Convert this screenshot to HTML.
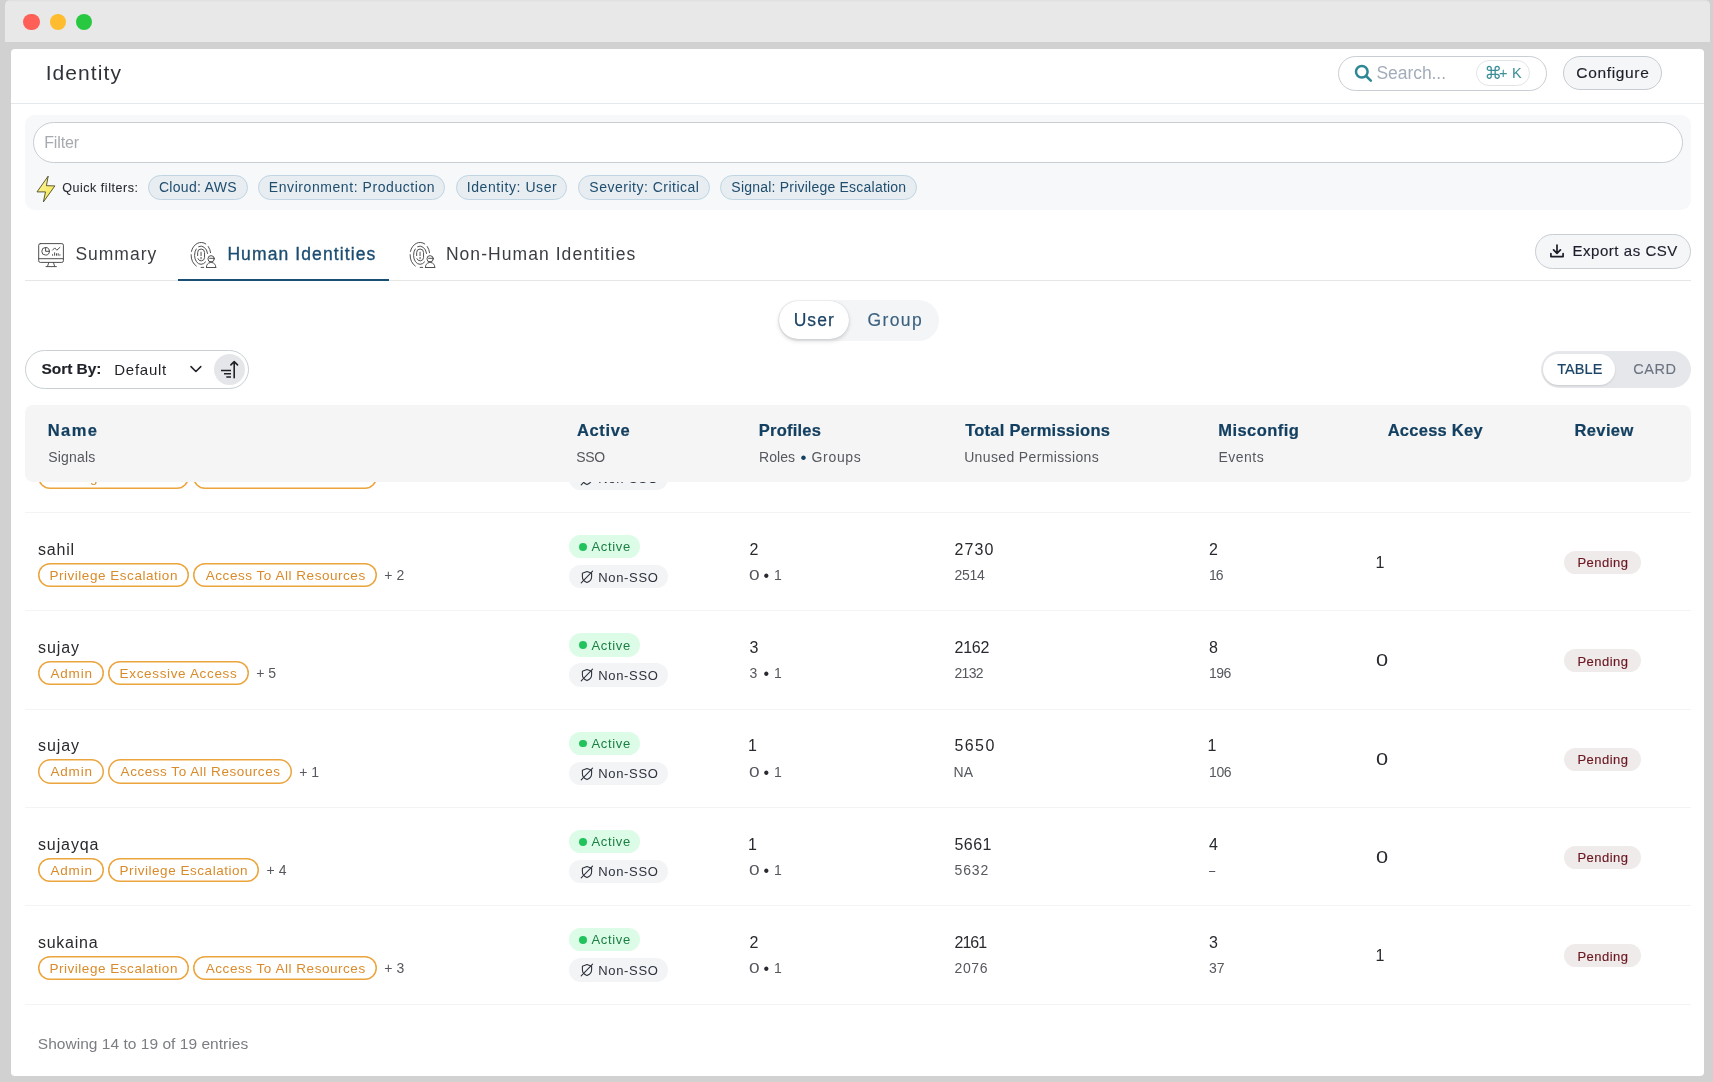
<!DOCTYPE html><html lang="en"><head><meta charset="utf-8"><title>Identity</title><style>
html,body{margin:0;padding:0}
body{width:1713px;height:1082px;background:#d1d1d1;position:relative;overflow:hidden;font-family:"Liberation Sans", "DejaVu Sans", sans-serif;}
.b{position:absolute;display:block}
.t{position:absolute;white-space:pre;line-height:1;display:block;z-index:1}
.hd{z-index:2}
.page{position:absolute;left:0;top:0;width:1713px;height:1082px;will-change:transform}

</style></head><body><div class="page">
<div class="frame">
<div class="b" style="left:5px;top:0px;width:1705px;height:42px;background:linear-gradient(#dedede,#e8e8e8 2px);border-radius:5px 5px 0 0;"></div>
<div class="b" style="left:23.3px;top:14.0px;width:16.4px;height:16.4px;background:#fe5f57;border-radius:9px;"></div>
<div class="b" style="left:49.5px;top:14.0px;width:16.4px;height:16.4px;background:#febc2e;border-radius:9px;"></div>
<div class="b" style="left:75.6px;top:14.0px;width:16.4px;height:16.4px;background:#28c840;border-radius:9px;"></div>
<div class="b" style="left:11px;top:49px;width:1693.4px;height:1026.6px;background:#ffffff;border-radius:4px;"></div>
</div>
<header class="appbar">
<span class="t" style="left:45.72px;top:62.00px;font-size:21px;color:#30343a;letter-spacing:1.065px;">Identity</span>
<div class="b" style="left:11.3px;top:102.6px;width:1693.2px;height:1.2px;background:#e4e8eb;"></div>
<div class="b" style="left:1338px;top:55.5px;width:209px;height:35px;background:#fff;border-radius:18px;border:1.2px solid #c8ced4;box-sizing:border-box;"></div>
<svg class="b" style="left:1353px;top:63px" width="20" height="20" viewBox="0 0 20 20"><circle cx="8.8" cy="8.7" r="5.8" fill="none" stroke="#2d8794" stroke-width="2.5"/><path d="M13.1 13.0 L17.8 17.6" stroke="#2d8794" stroke-width="2.6" stroke-linecap="round"/></svg>
<span class="t" style="left:1376.51px;top:65.00px;font-size:17.5px;color:#a3adba;letter-spacing:-0.063px;">Search...</span>
<div class="b" style="left:1476px;top:60.3px;width:53.7px;height:25.3px;background:#fff;border-radius:13px;border:1px solid #e1e5e8;box-sizing:border-box;"></div>
<span class="t" style="left:1484.60px;top:65.00px;font-size:17.5px;color:#3b8d98;">⌘</span>
<span class="t" style="left:1498.95px;top:66.00px;font-size:14.5px;color:#3b8d98;letter-spacing:0.307px;">+ K</span>
<div class="b" style="left:1563.2px;top:56px;width:99.3px;height:34px;background:#f5f6f7;border-radius:17px;border:1px solid #c6ccd2;box-sizing:border-box;"></div>
<span class="t" style="left:1576.30px;top:65.00px;font-size:15.5px;color:#1d1f2a;-webkit-text-stroke:0.15px #1d1f2a;letter-spacing:0.656px;">Configure</span>
</header>
<section class="filters">
<div class="b" style="left:25.2px;top:114.5px;width:1666.2px;height:95px;background:#f7f8f9;border-radius:10px;"></div>
<div class="b" style="left:33.4px;top:122.2px;width:1650px;height:41.3px;background:#fff;border-radius:21px;border:1.2px solid #c9ced3;box-sizing:border-box;"></div>
<span class="t" style="left:44.20px;top:135.00px;font-size:16px;color:#a6a9ad;letter-spacing:-0.139px;">Filter</span>
<svg class="b" style="left:34px;top:173px" width="24" height="32" viewBox="34 173 24 32"><defs><linearGradient id="lg" x1="0" y1="0" x2="1" y2="1"><stop offset="0" stop-color="#fcf6b0"/><stop offset="1" stop-color="#f6e440"/></linearGradient></defs><path d="M48.2 176.1 L37.0 191.9 L45.5 191.9 L43.4 201.9 L54.9 185.9 L46.4 185.7 Z" fill="url(#lg)" stroke="#4d4a25" stroke-width="0.9" stroke-linejoin="miter"/></svg>
<span class="t" style="left:62.24px;top:182.00px;font-size:12.5px;color:#2a2d32;-webkit-text-stroke:0.1px #2a2d32;letter-spacing:0.531px;">Quick filters:</span>
<div class="b" style="left:147.6px;top:175.2px;width:100.0px;height:24.6px;background:#e7edf1;border-radius:13px;border:1px solid #bfd5e3;box-sizing:border-box;"></div>
<span class="t" style="left:158.97px;top:180.00px;font-size:14px;color:#1f4d6e;letter-spacing:0.283px;">Cloud: AWS</span>
<div class="b" style="left:258.2px;top:175.2px;width:186.8px;height:24.6px;background:#e7edf1;border-radius:13px;border:1px solid #bfd5e3;box-sizing:border-box;"></div>
<span class="t" style="left:268.85px;top:180.00px;font-size:14px;color:#1f4d6e;letter-spacing:0.568px;">Environment: Production</span>
<div class="b" style="left:456.0px;top:175.2px;width:111.39999999999998px;height:24.6px;background:#e7edf1;border-radius:13px;border:1px solid #bfd5e3;box-sizing:border-box;"></div>
<span class="t" style="left:466.75px;top:180.00px;font-size:14px;color:#1f4d6e;letter-spacing:0.572px;">Identity: User</span>
<div class="b" style="left:578.2px;top:175.2px;width:131.79999999999995px;height:24.6px;background:#e7edf1;border-radius:13px;border:1px solid #bfd5e3;box-sizing:border-box;"></div>
<span class="t" style="left:589.37px;top:180.00px;font-size:14px;color:#1f4d6e;letter-spacing:0.499px;">Severity: Critical</span>
<div class="b" style="left:720.2px;top:175.2px;width:196.79999999999995px;height:24.6px;background:#e7edf1;border-radius:13px;border:1px solid #bfd5e3;box-sizing:border-box;"></div>
<span class="t" style="left:731.37px;top:180.00px;font-size:14px;color:#1f4d6e;letter-spacing:0.218px;">Signal: Privilege Escalation</span>
</section>
<nav class="tabs">
<div class="b" style="left:25.2px;top:280.3px;width:1666.2px;height:1.2px;background:#e4e6e8;"></div>
<div class="b" style="left:177.6px;top:278.5px;width:211px;height:2.7px;background:#1a4f75;"></div>
<svg class="b" style="left:36px;top:240px" width="30" height="30" viewBox="36 240 30 30"><g fill="none" stroke="#505050" stroke-width="1" stroke-linecap="round" stroke-linejoin="round"><rect x="38.7" y="243.6" width="24.7" height="18.8" rx="1.6"/><path d="M38.7 258.7 H63.4"/><path d="M48.8 262.4 L47.5 266.5 M53.4 262.4 L54.7 266.5 M46 266.6 H56.4"/><circle cx="45.6" cy="251.3" r="3.8"/><path d="M45.6 247.5 V251.3 H49.4"/><path d="M52.6 250.1 L54.7 247.9 L56.8 250.2 L59.9 247.4"/><path d="M52.6 254.2 V255.7 M54.6 252.4 V255.7 M56.5 253.3 V255.7 M58.2 253.3 V255.7 M59.9 254.4 V255.7" stroke-linecap="butt"/></g></svg>
<svg class="b" style="left:186px;top:238px" width="36" height="34" viewBox="186 238 36 34"><g fill="none" stroke="#505050" stroke-width="1" stroke-linecap="round" stroke-linejoin="round"><path d="M191.43 251.42 A9.8 12.3 0 0 1 205.80 243.95 M208.30 246.53 A9.8 12.3 0 0 1 210.58 252.68 M196.30 266.03 A9.8 12.6 0 0 1 191.10 254.68 M201.1 267.4 H203.7 M205.60 261.93 A6.6 9.2 0 0 1 196.20 249.04 M198.63 246.67 A6.6 9.2 0 0 1 207.58 253.44 M197.65 255.6 V252.5 A3.45 3.45 0 0 1 204.55 252.5 V257.6 A3.45 3.45 0 0 1 197.9 258.7 M201.05 252.2 V255.7 M201.05 257.4 V258.8"/><circle cx="211.1" cy="258.8" r="3.15"/><path d="M209.6 258.3 H214.5"/><path d="M209.9 262.0 Q211.1 262.5 212.3 262.0" stroke-width="1.3"/><path d="M206.4 267.4 C206.4 264.6 207.8 263.2 209.7 262.7 M212.5 262.7 C214.4 263.2 215.8 264.6 215.8 267.4 M206.4 267.5 H215.8"/></g></svg>
<svg class="b" style="left:405px;top:238px" width="36" height="34" viewBox="186 238 36 34"><g fill="none" stroke="#505050" stroke-width="1" stroke-linecap="round" stroke-linejoin="round"><path d="M191.43 251.42 A9.8 12.3 0 0 1 205.80 243.95 M208.30 246.53 A9.8 12.3 0 0 1 210.58 252.68 M196.30 266.03 A9.8 12.6 0 0 1 191.10 254.68 M201.1 267.4 H203.7 M205.60 261.93 A6.6 9.2 0 0 1 196.20 249.04 M198.63 246.67 A6.6 9.2 0 0 1 207.58 253.44 M197.65 255.6 V252.5 A3.45 3.45 0 0 1 204.55 252.5 V257.6 A3.45 3.45 0 0 1 197.9 258.7 M201.05 252.2 V255.7 M201.05 257.4 V258.8"/><circle cx="211.1" cy="258.8" r="3.15"/><path d="M209.6 258.3 H214.5"/><path d="M209.9 262.0 Q211.1 262.5 212.3 262.0" stroke-width="1.3"/><path d="M206.4 267.4 C206.4 264.6 207.8 263.2 209.7 262.7 M212.5 262.7 C214.4 263.2 215.8 264.6 215.8 267.4 M206.4 267.5 H215.8"/></g></svg>
<span class="t" style="left:75.41px;top:246.00px;font-size:17.5px;color:#3a3d42;letter-spacing:0.990px;">Summary</span>
<span class="t" style="left:227.39px;top:246.00px;font-size:17.5px;color:#1b4d72;-webkit-text-stroke:0.35px #1b4d72;letter-spacing:1.108px;">Human Identities</span>
<span class="t" style="left:445.89px;top:246.00px;font-size:17.5px;color:#3a3d42;letter-spacing:1.059px;">Non-Human Identities</span>
<div class="b" style="left:1535.2px;top:234px;width:156px;height:35px;background:#f4f6f8;border-radius:18px;border:1px solid #c9ced3;box-sizing:border-box;"></div>
<svg class="b" style="left:1549px;top:244px" width="16" height="15" viewBox="0 0 16 15"><path d="M8 1 V9 M4.6 5.9 L8 9.3 L11.4 5.9 M1.9 9.6 V12.6 H14.1 V9.6" fill="none" stroke="#1c1d29" stroke-width="1.7" stroke-linecap="round" stroke-linejoin="round"/></svg>
<span class="t" style="left:1572.38px;top:243.00px;font-size:15px;color:#1d1e2b;-webkit-text-stroke:0.15px #1d1e2b;letter-spacing:0.552px;">Export as CSV</span>
</nav>
<div class="toolbar">
<div class="b" style="left:778.3px;top:300px;width:161.2px;height:41.2px;background:#f3f5f7;border-radius:21px;"></div>
<div class="b" style="left:778.6px;top:300.6px;width:70.8px;height:38.6px;background:#fff;border-radius:20px;box-shadow:0 2px 4px rgba(0,0,0,.16),0 0 1px rgba(0,0,0,.18);"></div>
<span class="t" style="left:793.69px;top:312.00px;font-size:17.5px;color:#1c4466;-webkit-text-stroke:0.25px #1c4466;letter-spacing:1.049px;">User</span>
<span class="t" style="left:867.41px;top:312.00px;font-size:17.5px;color:#3c6280;-webkit-text-stroke:0.15px #3c6280;letter-spacing:1.400px;">Group</span>
<div class="b" style="left:25.2px;top:350px;width:223.5px;height:38.5px;background:#fff;border-radius:20px;border:1.2px solid #c8d0d4;box-sizing:border-box;"></div>
<span class="t" style="left:41.60px;top:361.00px;font-size:15.5px;color:#1f2128;font-weight:700;-webkit-text-stroke:0.15px #1f2128;letter-spacing:-0.071px;">Sort By:</span>
<span class="t" style="left:114.28px;top:362.00px;font-size:15px;color:#1f2128;letter-spacing:0.745px;">Default</span>
<svg class="b" style="left:188px;top:363px" width="16" height="12" viewBox="0 0 16 12"><path d="M3.0 3.6 L7.9 8.5 L12.8 3.6" fill="none" stroke="#1f2128" stroke-width="1.5" stroke-linecap="round" stroke-linejoin="round"/></svg>
<div class="b" style="left:214px;top:353.7px;width:31px;height:31px;background:#e5e6e9;border-radius:16px;"></div>
<svg class="b" style="left:218px;top:358px" width="24" height="24" viewBox="218 358 24 24"><path d="M221 370.6 H231 M224 373.8 H231 M226.3 377.1 H231" stroke="#1f2128" stroke-width="1.5" fill="none"/><path d="M234.2 377.8 V361.8 M230.9 364.9 L234.2 361.6 L237.5 364.9" stroke="#1f2128" stroke-width="1.6" fill="none" stroke-linecap="round" stroke-linejoin="round"/></svg>
<div class="b" style="left:1540.8px;top:351px;width:150.5px;height:37px;background:#e5e7eb;border-radius:19px;"></div>
<div class="b" style="left:1543px;top:354px;width:72px;height:31.4px;background:#fff;border-radius:16px;box-shadow:0 1px 2px rgba(0,0,0,.12);"></div>
<span class="t" style="left:1557.20px;top:362.00px;font-size:14.5px;color:#1c4466;-webkit-text-stroke:0.2px #1c4466;letter-spacing:0.073px;">TABLE</span>
<span class="t" style="left:1633.15px;top:362.00px;font-size:14.5px;color:#6b7280;-webkit-text-stroke:0.1px #6b7280;letter-spacing:0.613px;">CARD</span>
</div>
<article class="row r0">
<div class="b" style="left:25.2px;top:512.0px;width:1666.2px;height:1.2px;background:#f3f4f5;"></div>
<div class="b" style="left:37.900000000000006px;top:464.5px;width:150.9px;height:24.4px;background:#fff;border-radius:13px;box-shadow:inset 0 0 0 1.5px #eba53c;"></div>
<span class="t" style="left:49.39px;top:471.00px;font-size:13.5px;color:#d98b2b;letter-spacing:0.539px;">Privilege Escalation</span>
<div class="b" style="left:193.29999999999998px;top:464.5px;width:183.60000000000002px;height:24.4px;background:#fff;border-radius:13px;box-shadow:inset 0 0 0 1.5px #eba53c;"></div>
<span class="t" style="left:205.80px;top:471.00px;font-size:13.5px;color:#d98b2b;letter-spacing:0.535px;">Access To All Resources</span>
<div class="b" style="left:569.3px;top:436.6px;width:71.2px;height:23.4px;background:#dcfce7;border-radius:12px;"></div>
<div class="b" style="left:578.9px;top:444.6px;width:7.8px;height:7.8px;background:#22c35d;border-radius:4px;"></div>
<span class="t" style="left:591.40px;top:442.00px;font-size:13px;color:#1b7f43;letter-spacing:0.687px;">Active</span>
<div class="b" style="left:569.2px;top:466.8px;width:98.8px;height:23.4px;background:#f3f4f6;border-radius:12px;"></div>
<svg class="b" style="left:580px;top:471.70px" width="14" height="14" viewBox="0 0 14 14"><path d="M7 1.6 L11.6 3.2 V6.8 C11.6 9.6 9.6 11.6 7 12.6 C4.4 11.6 2.4 9.6 2.4 6.8 V3.2 Z" fill="none" stroke="#2c313c" stroke-width="1.1" stroke-linejoin="round"/><path d="M1.2 12.9 L12.6 1.1" stroke="#2c313c" stroke-width="1.1" stroke-linecap="round"/></svg>
<span class="t" style="left:598.23px;top:472.00px;font-size:13px;color:#2c313c;letter-spacing:0.680px;">Non-SSO</span>
</article>
<article class="row r1">
<div class="b" style="left:25.2px;top:610.3px;width:1666.2px;height:1.2px;background:#f3f4f5;"></div>
<span class="t" style="left:37.98px;top:542.00px;font-size:16px;color:#282a2f;letter-spacing:0.803px;">sahil</span>
<div class="b" style="left:37.900000000000006px;top:562.8000000000001px;width:150.9px;height:24.4px;background:#fff;border-radius:13px;box-shadow:inset 0 0 0 1.5px #eba53c;"></div>
<span class="t" style="left:49.39px;top:569.00px;font-size:13.5px;color:#d98b2b;letter-spacing:0.539px;">Privilege Escalation</span>
<div class="b" style="left:193.29999999999998px;top:562.8000000000001px;width:183.60000000000002px;height:24.4px;background:#fff;border-radius:13px;box-shadow:inset 0 0 0 1.5px #eba53c;"></div>
<span class="t" style="left:205.80px;top:569.00px;font-size:13.5px;color:#d98b2b;letter-spacing:0.535px;">Access To All Resources</span>
<span class="t" style="left:384.37px;top:568.00px;font-size:14px;color:#55585e;letter-spacing:0.076px;">+ 2</span>
<div class="b" style="left:569.3px;top:534.9px;width:71.2px;height:23.4px;background:#dcfce7;border-radius:12px;"></div>
<div class="b" style="left:578.9px;top:542.9px;width:7.8px;height:7.8px;background:#22c35d;border-radius:4px;"></div>
<span class="t" style="left:591.40px;top:540.00px;font-size:13px;color:#1b7f43;letter-spacing:0.687px;">Active</span>
<div class="b" style="left:569.2px;top:565.1px;width:98.8px;height:23.4px;background:#f3f4f6;border-radius:12px;"></div>
<svg class="b" style="left:580px;top:570.00px" width="14" height="14" viewBox="0 0 14 14"><path d="M7 1.6 L11.6 3.2 V6.8 C11.6 9.6 9.6 11.6 7 12.6 C4.4 11.6 2.4 9.6 2.4 6.8 V3.2 Z" fill="none" stroke="#2c313c" stroke-width="1.1" stroke-linejoin="round"/><path d="M1.2 12.9 L12.6 1.1" stroke="#2c313c" stroke-width="1.1" stroke-linecap="round"/></svg>
<span class="t" style="left:598.23px;top:571.00px;font-size:13px;color:#2c313c;letter-spacing:0.680px;">Non-SSO</span>
<span class="t" style="left:749.60px;top:542.00px;font-size:16px;color:#282a2f;">2</span>
<span class="t" style="left:749.11px;top:568.00px;font-size:14px;color:#55585e;transform:scaleX(1.36);transform-origin:0 0;">0</span>
<span class="t" style="left:763.60px;top:568.00px;font-size:16px;color:#282a2f;">•</span>
<span class="t" style="left:773.88px;top:568.00px;font-size:14px;color:#55585e;">1</span>
<span class="t" style="left:954.50px;top:542.00px;font-size:16px;color:#282a2f;letter-spacing:1.110px;">2730</span>
<span class="t" style="left:954.50px;top:568.00px;font-size:14px;color:#55585e;letter-spacing:-0.296px;">2514</span>
<span class="t" style="left:1209.00px;top:542.00px;font-size:16px;color:#282a2f;">2</span>
<span class="t" style="left:1209.00px;top:568.00px;font-size:14px;color:#55585e;letter-spacing:-1.000px;">16</span>
<span class="t" style="left:1375.49px;top:555.00px;font-size:16px;color:#282a2f;">1</span>
<div class="b" style="left:1564.0px;top:551.1px;width:77.1px;height:22.9px;background:#f0ebeb;border-radius:12px;"></div>
<span class="t" style="left:1577.43px;top:556.00px;font-size:13px;color:#6a1720;-webkit-text-stroke:0.15px #6a1720;letter-spacing:0.483px;">Pending</span>
</article>
<article class="row r2">
<div class="b" style="left:25.2px;top:708.5999999999999px;width:1666.2px;height:1.2px;background:#f3f4f5;"></div>
<span class="t" style="left:37.98px;top:640.00px;font-size:16px;color:#282a2f;letter-spacing:0.942px;">sujay</span>
<div class="b" style="left:37.900000000000006px;top:661.1px;width:65.7px;height:24.4px;background:#fff;border-radius:13px;box-shadow:inset 0 0 0 1.5px #eba53c;"></div>
<span class="t" style="left:50.40px;top:667.00px;font-size:13.5px;color:#d98b2b;letter-spacing:0.855px;">Admin</span>
<div class="b" style="left:108.10000000000001px;top:661.1px;width:140.5px;height:24.4px;background:#fff;border-radius:13px;box-shadow:inset 0 0 0 1.5px #eba53c;"></div>
<span class="t" style="left:119.59px;top:667.00px;font-size:13.5px;color:#d98b2b;letter-spacing:0.660px;">Excessive Access</span>
<span class="t" style="left:256.17px;top:666.00px;font-size:14px;color:#55585e;letter-spacing:0.076px;">+ 5</span>
<div class="b" style="left:569.3px;top:633.1999999999999px;width:71.2px;height:23.4px;background:#dcfce7;border-radius:12px;"></div>
<div class="b" style="left:578.9px;top:641.1999999999999px;width:7.8px;height:7.8px;background:#22c35d;border-radius:4px;"></div>
<span class="t" style="left:591.40px;top:639.00px;font-size:13px;color:#1b7f43;letter-spacing:0.687px;">Active</span>
<div class="b" style="left:569.2px;top:663.4px;width:98.8px;height:23.4px;background:#f3f4f6;border-radius:12px;"></div>
<svg class="b" style="left:580px;top:668.30px" width="14" height="14" viewBox="0 0 14 14"><path d="M7 1.6 L11.6 3.2 V6.8 C11.6 9.6 9.6 11.6 7 12.6 C4.4 11.6 2.4 9.6 2.4 6.8 V3.2 Z" fill="none" stroke="#2c313c" stroke-width="1.1" stroke-linejoin="round"/><path d="M1.2 12.9 L12.6 1.1" stroke="#2c313c" stroke-width="1.1" stroke-linecap="round"/></svg>
<span class="t" style="left:598.23px;top:669.00px;font-size:13px;color:#2c313c;letter-spacing:0.680px;">Non-SSO</span>
<span class="t" style="left:749.60px;top:640.00px;font-size:16px;color:#282a2f;">3</span>
<span class="t" style="left:749.60px;top:666.00px;font-size:14px;color:#55585e;">3</span>
<span class="t" style="left:763.60px;top:666.00px;font-size:16px;color:#282a2f;">•</span>
<span class="t" style="left:773.88px;top:666.00px;font-size:14px;color:#55585e;">1</span>
<span class="t" style="left:954.50px;top:640.00px;font-size:16px;color:#282a2f;letter-spacing:-0.261px;">2162</span>
<span class="t" style="left:954.50px;top:666.00px;font-size:14px;color:#55585e;letter-spacing:-0.667px;">2132</span>
<span class="t" style="left:1209.00px;top:640.00px;font-size:16px;color:#282a2f;">8</span>
<span class="t" style="left:1209.00px;top:666.00px;font-size:14px;color:#55585e;letter-spacing:-0.536px;">196</span>
<span class="t" style="left:1376.44px;top:653.00px;font-size:16px;color:#282a2f;transform:scaleX(1.36);transform-origin:0 0;">0</span>
<div class="b" style="left:1564.0px;top:649.4px;width:77.1px;height:22.9px;background:#f0ebeb;border-radius:12px;"></div>
<span class="t" style="left:1577.43px;top:655.00px;font-size:13px;color:#6a1720;-webkit-text-stroke:0.15px #6a1720;letter-spacing:0.483px;">Pending</span>
</article>
<article class="row r3">
<div class="b" style="left:25.2px;top:806.9px;width:1666.2px;height:1.2px;background:#f3f4f5;"></div>
<span class="t" style="left:37.98px;top:738.00px;font-size:16px;color:#282a2f;letter-spacing:0.942px;">sujay</span>
<div class="b" style="left:37.900000000000006px;top:759.4000000000001px;width:65.7px;height:24.4px;background:#fff;border-radius:13px;box-shadow:inset 0 0 0 1.5px #eba53c;"></div>
<span class="t" style="left:50.40px;top:765.00px;font-size:13.5px;color:#d98b2b;letter-spacing:0.855px;">Admin</span>
<div class="b" style="left:108.10000000000001px;top:759.4000000000001px;width:183.60000000000002px;height:24.4px;background:#fff;border-radius:13px;box-shadow:inset 0 0 0 1.5px #eba53c;"></div>
<span class="t" style="left:120.60px;top:765.00px;font-size:13.5px;color:#d98b2b;letter-spacing:0.535px;">Access To All Resources</span>
<span class="t" style="left:299.17px;top:765.00px;font-size:14px;color:#55585e;letter-spacing:0.076px;">+ 1</span>
<div class="b" style="left:569.3px;top:731.5px;width:71.2px;height:23.4px;background:#dcfce7;border-radius:12px;"></div>
<div class="b" style="left:578.9px;top:739.5px;width:7.8px;height:7.8px;background:#22c35d;border-radius:4px;"></div>
<span class="t" style="left:591.40px;top:737.00px;font-size:13px;color:#1b7f43;letter-spacing:0.687px;">Active</span>
<div class="b" style="left:569.2px;top:761.7px;width:98.8px;height:23.4px;background:#f3f4f6;border-radius:12px;"></div>
<svg class="b" style="left:580px;top:766.60px" width="14" height="14" viewBox="0 0 14 14"><path d="M7 1.6 L11.6 3.2 V6.8 C11.6 9.6 9.6 11.6 7 12.6 C4.4 11.6 2.4 9.6 2.4 6.8 V3.2 Z" fill="none" stroke="#2c313c" stroke-width="1.1" stroke-linejoin="round"/><path d="M1.2 12.9 L12.6 1.1" stroke="#2c313c" stroke-width="1.1" stroke-linecap="round"/></svg>
<span class="t" style="left:598.23px;top:767.00px;font-size:13px;color:#2c313c;letter-spacing:0.680px;">Non-SSO</span>
<span class="t" style="left:748.09px;top:738.00px;font-size:16px;color:#282a2f;">1</span>
<span class="t" style="left:749.11px;top:765.00px;font-size:14px;color:#55585e;transform:scaleX(1.36);transform-origin:0 0;">0</span>
<span class="t" style="left:763.60px;top:765.00px;font-size:16px;color:#282a2f;">•</span>
<span class="t" style="left:773.88px;top:765.00px;font-size:14px;color:#55585e;">1</span>
<span class="t" style="left:954.50px;top:738.00px;font-size:16px;color:#282a2f;letter-spacing:1.400px;">5650</span>
<span class="t" style="left:953.45px;top:765.00px;font-size:14px;color:#55585e;letter-spacing:0.278px;">NA</span>
<span class="t" style="left:1207.49px;top:738.00px;font-size:16px;color:#282a2f;">1</span>
<span class="t" style="left:1209.00px;top:765.00px;font-size:14px;color:#55585e;letter-spacing:-0.376px;">106</span>
<span class="t" style="left:1376.44px;top:752.00px;font-size:16px;color:#282a2f;transform:scaleX(1.36);transform-origin:0 0;">0</span>
<div class="b" style="left:1564.0px;top:747.7px;width:77.1px;height:22.9px;background:#f0ebeb;border-radius:12px;"></div>
<span class="t" style="left:1577.43px;top:753.00px;font-size:13px;color:#6a1720;-webkit-text-stroke:0.15px #6a1720;letter-spacing:0.483px;">Pending</span>
</article>
<article class="row r4">
<div class="b" style="left:25.2px;top:905.1999999999999px;width:1666.2px;height:1.2px;background:#f3f4f5;"></div>
<span class="t" style="left:37.98px;top:837.00px;font-size:16px;color:#282a2f;letter-spacing:0.890px;">sujayqa</span>
<div class="b" style="left:37.900000000000006px;top:857.7px;width:65.7px;height:24.4px;background:#fff;border-radius:13px;box-shadow:inset 0 0 0 1.5px #eba53c;"></div>
<span class="t" style="left:50.40px;top:864.00px;font-size:13.5px;color:#d98b2b;letter-spacing:0.855px;">Admin</span>
<div class="b" style="left:108.10000000000001px;top:857.7px;width:150.89999999999998px;height:24.4px;background:#fff;border-radius:13px;box-shadow:inset 0 0 0 1.5px #eba53c;"></div>
<span class="t" style="left:119.59px;top:864.00px;font-size:13.5px;color:#d98b2b;letter-spacing:0.539px;">Privilege Escalation</span>
<span class="t" style="left:266.57px;top:863.00px;font-size:14px;color:#55585e;letter-spacing:0.076px;">+ 4</span>
<div class="b" style="left:569.3px;top:829.8px;width:71.2px;height:23.4px;background:#dcfce7;border-radius:12px;"></div>
<div class="b" style="left:578.9px;top:837.8px;width:7.8px;height:7.8px;background:#22c35d;border-radius:4px;"></div>
<span class="t" style="left:591.40px;top:835.00px;font-size:13px;color:#1b7f43;letter-spacing:0.687px;">Active</span>
<div class="b" style="left:569.2px;top:860.0px;width:98.8px;height:23.4px;background:#f3f4f6;border-radius:12px;"></div>
<svg class="b" style="left:580px;top:864.90px" width="14" height="14" viewBox="0 0 14 14"><path d="M7 1.6 L11.6 3.2 V6.8 C11.6 9.6 9.6 11.6 7 12.6 C4.4 11.6 2.4 9.6 2.4 6.8 V3.2 Z" fill="none" stroke="#2c313c" stroke-width="1.1" stroke-linejoin="round"/><path d="M1.2 12.9 L12.6 1.1" stroke="#2c313c" stroke-width="1.1" stroke-linecap="round"/></svg>
<span class="t" style="left:598.23px;top:865.00px;font-size:13px;color:#2c313c;letter-spacing:0.680px;">Non-SSO</span>
<span class="t" style="left:748.09px;top:837.00px;font-size:16px;color:#282a2f;">1</span>
<span class="t" style="left:749.11px;top:863.00px;font-size:14px;color:#55585e;transform:scaleX(1.36);transform-origin:0 0;">0</span>
<span class="t" style="left:763.60px;top:863.00px;font-size:16px;color:#282a2f;">•</span>
<span class="t" style="left:773.88px;top:863.00px;font-size:14px;color:#55585e;">1</span>
<span class="t" style="left:954.50px;top:837.00px;font-size:16px;color:#282a2f;letter-spacing:0.425px;">5661</span>
<span class="t" style="left:954.50px;top:863.00px;font-size:14px;color:#55585e;letter-spacing:0.847px;">5632</span>
<span class="t" style="left:1209.00px;top:837.00px;font-size:16px;color:#282a2f;">4</span>
<span class="t" style="left:1209.00px;top:863.00px;font-size:14px;color:#55585e;transform:scaleX(0.8);transform-origin:0 0;">–</span>
<span class="t" style="left:1376.44px;top:850.00px;font-size:16px;color:#282a2f;transform:scaleX(1.36);transform-origin:0 0;">0</span>
<div class="b" style="left:1564.0px;top:846.0px;width:77.1px;height:22.9px;background:#f0ebeb;border-radius:12px;"></div>
<span class="t" style="left:1577.43px;top:851.00px;font-size:13px;color:#6a1720;-webkit-text-stroke:0.15px #6a1720;letter-spacing:0.483px;">Pending</span>
</article>
<article class="row r5">
<div class="b" style="left:25.2px;top:1003.4999999999999px;width:1666.2px;height:1.2px;background:#f3f4f5;"></div>
<span class="t" style="left:37.98px;top:935.00px;font-size:16px;color:#282a2f;letter-spacing:0.736px;">sukaina</span>
<div class="b" style="left:37.900000000000006px;top:956.0px;width:150.9px;height:24.4px;background:#fff;border-radius:13px;box-shadow:inset 0 0 0 1.5px #eba53c;"></div>
<span class="t" style="left:49.39px;top:962.00px;font-size:13.5px;color:#d98b2b;letter-spacing:0.539px;">Privilege Escalation</span>
<div class="b" style="left:193.29999999999998px;top:956.0px;width:183.60000000000002px;height:24.4px;background:#fff;border-radius:13px;box-shadow:inset 0 0 0 1.5px #eba53c;"></div>
<span class="t" style="left:205.80px;top:962.00px;font-size:13.5px;color:#d98b2b;letter-spacing:0.535px;">Access To All Resources</span>
<span class="t" style="left:384.37px;top:961.00px;font-size:14px;color:#55585e;letter-spacing:0.076px;">+ 3</span>
<div class="b" style="left:569.3px;top:928.0999999999999px;width:71.2px;height:23.4px;background:#dcfce7;border-radius:12px;"></div>
<div class="b" style="left:578.9px;top:936.0999999999999px;width:7.8px;height:7.8px;background:#22c35d;border-radius:4px;"></div>
<span class="t" style="left:591.40px;top:933.00px;font-size:13px;color:#1b7f43;letter-spacing:0.687px;">Active</span>
<div class="b" style="left:569.2px;top:958.3px;width:98.8px;height:23.4px;background:#f3f4f6;border-radius:12px;"></div>
<svg class="b" style="left:580px;top:963.20px" width="14" height="14" viewBox="0 0 14 14"><path d="M7 1.6 L11.6 3.2 V6.8 C11.6 9.6 9.6 11.6 7 12.6 C4.4 11.6 2.4 9.6 2.4 6.8 V3.2 Z" fill="none" stroke="#2c313c" stroke-width="1.1" stroke-linejoin="round"/><path d="M1.2 12.9 L12.6 1.1" stroke="#2c313c" stroke-width="1.1" stroke-linecap="round"/></svg>
<span class="t" style="left:598.23px;top:964.00px;font-size:13px;color:#2c313c;letter-spacing:0.680px;">Non-SSO</span>
<span class="t" style="left:749.60px;top:935.00px;font-size:16px;color:#282a2f;">2</span>
<span class="t" style="left:749.11px;top:961.00px;font-size:14px;color:#55585e;transform:scaleX(1.36);transform-origin:0 0;">0</span>
<span class="t" style="left:763.60px;top:961.00px;font-size:16px;color:#282a2f;">•</span>
<span class="t" style="left:773.88px;top:961.00px;font-size:14px;color:#55585e;">1</span>
<span class="t" style="left:954.50px;top:935.00px;font-size:16px;color:#282a2f;letter-spacing:-1.000px;">2161</span>
<span class="t" style="left:954.50px;top:961.00px;font-size:14px;color:#55585e;letter-spacing:0.590px;">2076</span>
<span class="t" style="left:1209.00px;top:935.00px;font-size:16px;color:#282a2f;">3</span>
<span class="t" style="left:1209.00px;top:961.00px;font-size:14px;color:#55585e;letter-spacing:0.028px;">37</span>
<span class="t" style="left:1375.49px;top:948.00px;font-size:16px;color:#282a2f;">1</span>
<div class="b" style="left:1564.0px;top:944.3px;width:77.1px;height:22.9px;background:#f0ebeb;border-radius:12px;"></div>
<span class="t" style="left:1577.43px;top:950.00px;font-size:13px;color:#6a1720;-webkit-text-stroke:0.15px #6a1720;letter-spacing:0.483px;">Pending</span>
</article>
<div class="thead">
<div class="b hd" style="left:25.2px;top:404.8px;width:1666.2px;height:77.1px;background:#f5f5f5;border-radius:8px;"></div>
<span class="t" style="left:47.76px;top:422.00px;font-size:16.5px;color:#133f60;font-weight:700;-webkit-text-stroke:0.2px #133f60;letter-spacing:1.400px;z-index:3;">Name</span>
<span class="t" style="left:577.00px;top:422.00px;font-size:16.5px;color:#133f60;font-weight:700;-webkit-text-stroke:0.2px #133f60;letter-spacing:0.620px;z-index:3;">Active</span>
<span class="t" style="left:758.76px;top:422.00px;font-size:16.5px;color:#133f60;font-weight:700;-webkit-text-stroke:0.2px #133f60;letter-spacing:0.233px;z-index:3;">Profiles</span>
<span class="t" style="left:965.20px;top:422.00px;font-size:16.5px;color:#133f60;font-weight:700;-webkit-text-stroke:0.2px #133f60;letter-spacing:0.239px;z-index:3;">Total Permissions</span>
<span class="t" style="left:1218.26px;top:422.00px;font-size:16.5px;color:#133f60;font-weight:700;-webkit-text-stroke:0.2px #133f60;letter-spacing:0.456px;z-index:3;">Misconfig</span>
<span class="t" style="left:1387.70px;top:422.00px;font-size:16.5px;color:#133f60;font-weight:700;-webkit-text-stroke:0.2px #133f60;letter-spacing:0.257px;z-index:3;">Access Key</span>
<span class="t" style="left:1574.46px;top:422.00px;font-size:16.5px;color:#133f60;font-weight:700;-webkit-text-stroke:0.2px #133f60;letter-spacing:0.392px;z-index:3;">Review</span>
<span class="t" style="left:48.37px;top:450.00px;font-size:14px;color:#55585e;letter-spacing:0.144px;z-index:3;">Signals</span>
<span class="t" style="left:576.37px;top:450.00px;font-size:14px;color:#55585e;letter-spacing:-0.447px;z-index:3;">SSO</span>
<span class="t" style="left:758.95px;top:450.00px;font-size:14px;color:#55585e;letter-spacing:0.085px;z-index:3;">Roles</span>
<span class="t" style="left:811.57px;top:450.00px;font-size:14px;color:#55585e;letter-spacing:0.661px;z-index:3;">Groups</span>
<span class="t" style="left:964.15px;top:450.00px;font-size:14px;color:#55585e;letter-spacing:0.365px;z-index:3;">Unused Permissions</span>
<span class="t" style="left:1218.45px;top:450.00px;font-size:14px;color:#55585e;letter-spacing:0.503px;z-index:3;">Events</span>
<span class="t" style="left:800.60px;top:449.00px;font-size:17px;color:#133f60;z-index:3;">•</span>
</div>
<footer class="pager">
<span class="t" style="left:37.80px;top:1036.00px;font-size:15.5px;color:#7a7d82;letter-spacing:0.034px;">Showing 14 to 19 of 19 entries</span>
</footer>
</div></body></html>
